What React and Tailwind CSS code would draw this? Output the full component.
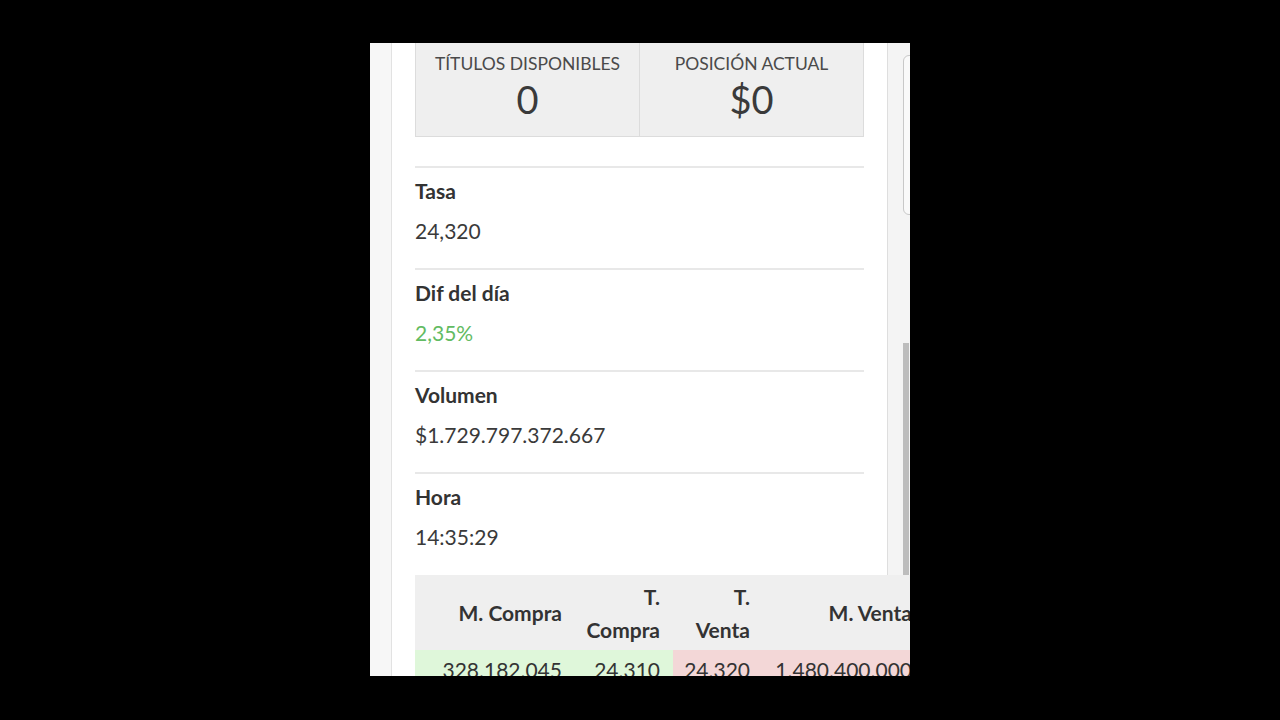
import React from "react";

const rows = [
  { label: "Tasa", value: "24,320" },
  { label: "Dif del día", value: "2,35%", green: true },
  { label: "Volumen", value: "$1.729.797.372.667" },
  { label: "Hora", value: "14:35:29" },
];

function StatBox({ label, value, className }) {
  return (
    <div className={"flex-1 bg-[#efefef] border-b border-[#dcdcdc] flex flex-col items-center pt-[10px] pb-[17px] " + className}>
      <div className="text-[17.5px] leading-[22px] text-[#4a4a4a] uppercase">{label}</div>
      <div className="mt-[4px] text-[38px] leading-[40px] font-normal text-[#3a3a3a]">{value}</div>
    </div>
  );
}

export default function App() {
  return (
    <div
      className="w-full h-[720px] bg-black flex justify-center pt-[43px]"
      style={{ fontFamily: "Lato, 'Noto Sans', sans-serif" }}
    >
      <div className="w-[540px] h-[633px] overflow-hidden bg-white flex">
        {/* left gutter */}
        <div className="w-[22px] shrink-0 bg-[#f7f7f7] border-r border-[#e2e2e2]" />

        {/* main column */}
        <div className="relative z-10 w-[496px] shrink-0 border-r border-[#dedede] pl-[23px]">
          <div className="w-[449px]">
            <div className="flex">
              <StatBox label="Títulos disponibles" value="0" className="border-l border-r border-[#dcdcdc]" />
              <StatBox label="Posición actual" value="$0" className="border-r border-[#dcdcdc]" />
            </div>

            <div className="mt-[29px]">
              {rows.map((r) => (
                <div key={r.label} className="border-t-2 border-[#e8e8e8] pt-[9px] pb-[23px]">
                  <div className="text-[21px] leading-[28px] font-bold text-[#333]">{r.label}</div>
                  <div
                    className={
                      "mt-[12px] text-[21px] leading-[28px] " +
                      (r.green ? "text-[#62bb62]" : "text-[#3a3a3a]")
                    }
                  >
                    {r.value}
                  </div>
                </div>
              ))}
            </div>
          </div>

          {/* orders table, wider than the column */}
          <table className="mt-[1px] w-[510px] table-fixed border-collapse text-[21px] text-[#333]">
            <colgroup>
              <col className="w-[160px]" />
              <col className="w-[98px]" />
              <col className="w-[90px]" />
              <col className="w-[162px]" />
            </colgroup>
            <thead>
              <tr className="bg-[#efefef] h-[75px]">
                <th className="text-right align-middle pr-[13px] font-bold leading-[33px] whitespace-nowrap">M. Compra</th>
                <th className="text-right align-middle pr-[13px] font-bold leading-[33px]">
                  T.
                  <br />
                  Compra
                </th>
                <th className="text-right align-middle pr-[13px] font-bold leading-[33px]">
                  T.
                  <br />
                  Venta
                </th>
                <th className="text-right align-middle pr-[13px] font-bold leading-[33px] whitespace-nowrap">M. Venta</th>
              </tr>
            </thead>
            <tbody>
              <tr>
                <td className="bg-[#dff7da] text-right pr-[13px] pt-[6px] leading-[28px] whitespace-nowrap">328.182.045</td>
                <td className="bg-[#dff7da] text-right pr-[13px] pt-[6px] leading-[28px]">24.310</td>
                <td className="bg-[#f3d7d7] text-right pr-[13px] pt-[6px] leading-[28px]">24.320</td>
                <td className="bg-[#f3d7d7] text-right pr-[13px] pt-[6px] leading-[28px] whitespace-nowrap">1.480.400.000</td>
              </tr>
            </tbody>
          </table>
        </div>

        {/* right gutter with scroll bits */}
        <div className="relative w-[22px] shrink-0 bg-[#f4f4f4]">
          <div className="absolute left-[15px] top-[12px] w-[20px] h-[160px] border border-[#c8c8c8] rounded-md bg-[#f9f9f9]" />
          <div className="absolute left-[15px] top-[300px] w-[6px] bottom-0 bg-[#bdbdbd]" />
        </div>
      </div>
    </div>
  );
}
